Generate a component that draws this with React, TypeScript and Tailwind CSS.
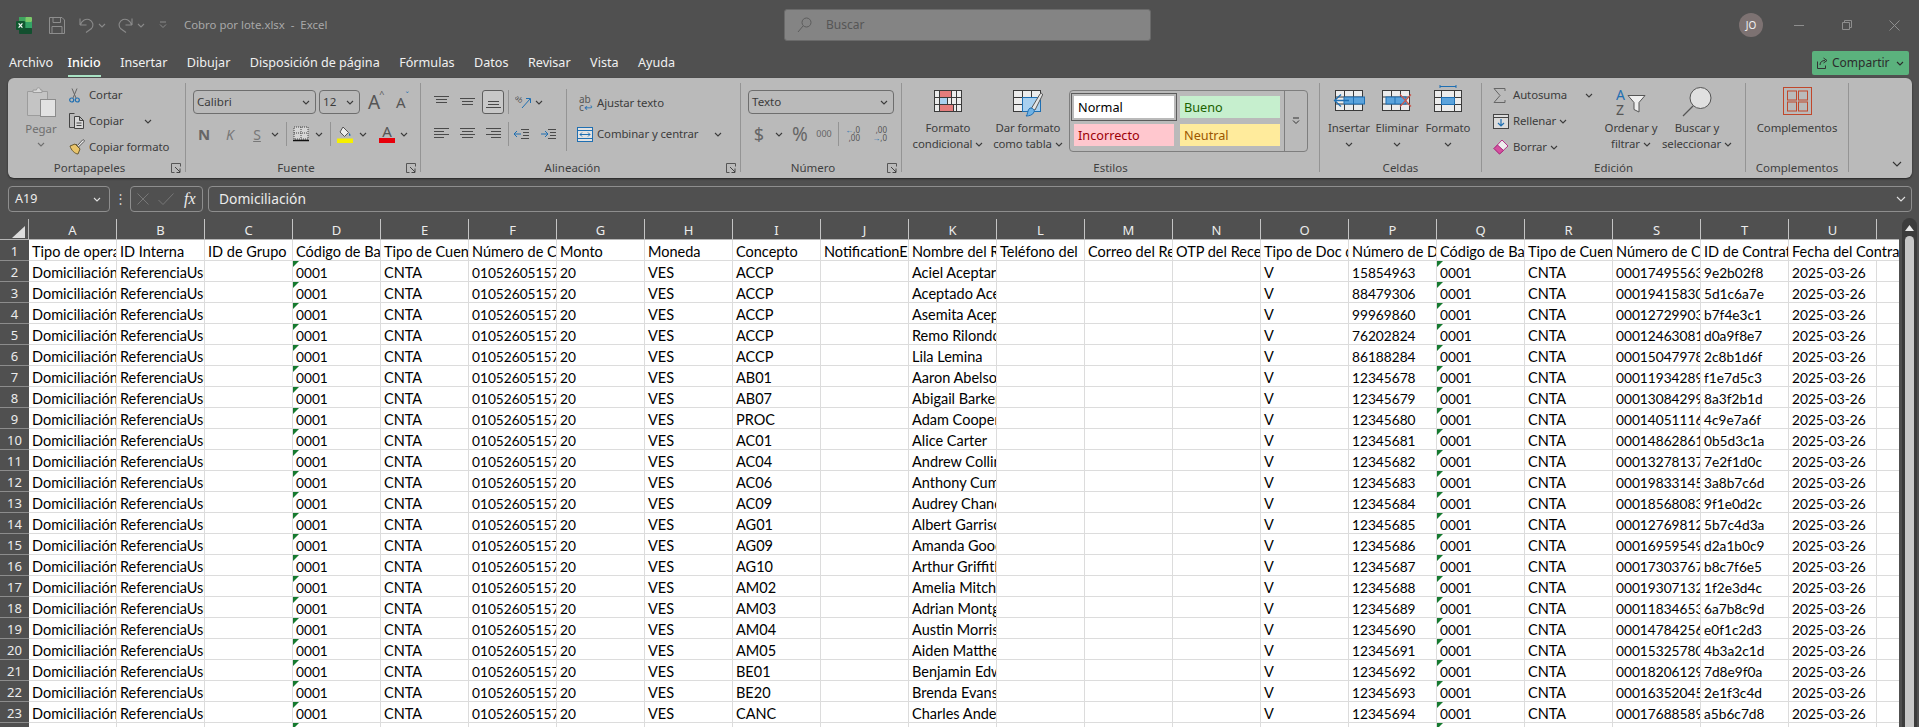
import type { ReactNode } from "react";

const ink = "#4a4a4a";
const blue = "#1f6fb2";

function Chev({ className = "", color = "#3c3c3c" }: { className?: string; color?: string }) {
  return (
    <svg width="8" height="5" viewBox="0 0 8 5" className={`shrink-0 ${className}`}>
      <path d="M1 1l3 3 3-3" fill="none" stroke={color} strokeWidth="1.1" />
    </svg>
  );
}

function Launcher() {
  return (
    <svg width="10" height="10" viewBox="0 0 10 10" className="absolute right-[4px] bottom-[5px]">
      <path d="M.5 9.5v-9h9v3M.5 9.5h3" fill="none" stroke="#555" />
      <path d="M4 4l5 5M9 5.5v4H5.5" fill="none" stroke="#444" />
    </svg>
  );
}

function VRule({ className = "" }: { className?: string }) {
  return <div className={`w-px shrink-0 bg-[#949494] ${className}`} />;
}

function Group({ label, width, launcher, labelPad, children }: { label: string; width: string; launcher?: boolean; labelPad?: string; children: ReactNode }) {
  return (
    <>
      <div className={`relative flex flex-col h-full shrink-0 ${width}`}>
        <div className="flex h-[82px]">{children}</div>
        <div className={`h-[16px] leading-[16px] text-[11.5px] text-center text-[#3f3f3f] ${labelPad ?? ""}`}>{label}</div>
        {launcher && <Launcher />}
      </div>
      <VRule className="h-[89px] mt-[5px]" />
    </>
  );
}

function BigButton({ icon, lines, width, chev, chevBelow }: { icon: ReactNode; lines: string[]; width: string; chev?: boolean; chevBelow?: boolean }) {
  return (
    <div className={`flex flex-col items-center shrink-0 ${width}`}>
      <div className="h-[42px] flex justify-center items-start">{icon}</div>
      {lines.map((l, i) => (
        <div key={l} className="h-[16px] leading-[16px] whitespace-nowrap flex items-center gap-[3px] text-[11.4px] tracking-[-0.1px] text-[#3c3c3c]">
          {l}
          {chev && i === lines.length - 1 && <Chev />}
        </div>
      ))}
      {chevBelow && (
        <div className="h-[16px] flex items-center">
          <Chev />
        </div>
      )}
    </div>
  );
}

function CmdRow({ icon, label, tail, color = "#3c3c3c" }: { icon: ReactNode; label: string; tail?: ReactNode; color?: string }) {
  return (
    <div className="flex items-center h-[26px] text-[11.4px] tracking-[-0.1px] whitespace-nowrap" style={{ color }}>
      <div className="w-[20px] shrink-0 flex items-center">{icon}</div>
      {label}
      {tail}
    </div>
  );
}

function SelectBox({ value, width }: { value: string; width: string }) {
  return (
    <div className={`flex items-center justify-between h-[24px] border border-[#6e6e6e] rounded-[4px] pl-[3px] pr-[5px] text-[11.6px] text-[#3c3c3c] ${width}`}>
      {value}
      <Chev />
    </div>
  );
}

/* ---------- title bar icons ---------- */

function ExcelLogo() {
  return (
    <svg width="16" height="17" viewBox="0 0 16 17" className="shrink-0">
      <rect x="3" y="0" width="13" height="17" rx="1.5" fill="#1d6f42" />
      <rect x="9" y="0" width="7" height="5" rx="1" fill="#7cc96a" />
      <rect x="3" y="0" width="6.5" height="5" fill="#3fa35f" />
      <rect x="9.5" y="5" width="6.5" height="6" fill="#33a466" />
      <rect x="3" y="11" width="13" height="6" rx="1" fill="#134f2f" />
      <rect x="0" y="4" width="9" height="9" rx="1" fill="#10582f" />
      <path d="M2.6 6.3l3.8 4.4M6.4 6.3l-3.8 4.4" stroke="#fff" strokeWidth="1.2" />
    </svg>
  );
}

function SaveIco() {
  return (
    <svg width="16" height="17" viewBox="0 0 16 17" className="shrink-0">
      <path d="M.5.5h12.5l2.500 2.500v13.500h-15z M4 .5v5h7.500v-5 M3 16.500v-7h10v7" fill="none" stroke="#8e8e8e" />
    </svg>
  );
}

function UndoIco({ flip }: { flip?: boolean }) {
  return (
    <svg width="15" height="16" viewBox="0 0 15 16" className={`shrink-0 ${flip ? "-scale-x-100" : ""}`}>
      <path d="M1 8V1.500M1 8h6.500M1.500 7.500C3 3 7 1.500 10 2.500c4 1.500 5 6 2.500 9L7 15.500" fill="none" stroke="#8a8a8a" strokeWidth="1.1" />
    </svg>
  );
}

/* ---------- ribbon icons ---------- */

const PasteIco = (
  <svg width="29" height="30" viewBox="0 0 29 30" className="mt-[9px]">
    <path d="M.5 4.500h20v24H.5z" fill="#c4c4c4" stroke="#9c9c9c" />
    <path d="M6 5.500V3h3.500c0-3 4-3 4 0H15v2.500z" fill="#d8d8d8" stroke="#9c9c9c" />
    <rect x="13.500" y="12.500" width="15" height="17" fill="#e2e2e2" stroke="#8c8c8c" />
  </svg>
);

const CutIco = (
  <svg width="11" height="15" viewBox="0 0 11 15">
    <path d="M3 .5l4 9.500M8 .5L4 10" fill="none" stroke="#666" />
    <circle cx="2.700" cy="12" r="2" fill="none" stroke={blue} strokeWidth="1.200" />
    <circle cx="8.300" cy="12" r="2" fill="none" stroke={blue} strokeWidth="1.200" />
  </svg>
);

const CopyIco = (
  <svg width="15" height="16" viewBox="0 0 15 16">
    <path d="M5 14.500H.5V.5h5" fill="none" stroke="#444" />
    <path d="M5.500 3.500h5l4 4v8h-9z M10.500 3.500v4h4M7.500 10h5M7.500 12.500h5" fill="#d8d8d8" stroke="#444" />
  </svg>
);

const PainterIco = (
  <svg width="16" height="16" viewBox="0 0 16 16">
    <path d="M1 7l5-2 5 5-2 5c-3 0-7-4-8-8z" fill="#e9c46a" stroke="#6a5a30" />
    <path d="M7 5l4 5" stroke="#6a5a30" />
    <path d="M8.500 6.500L13.500 1c1-1 2.500.5 1.500 1.500L9.500 8" fill="#eee" stroke="#555" />
  </svg>
);

const BorderIco = (
  <svg width="16" height="16" viewBox="0 0 16 16">
    <rect x="1" y="1" width="14" height="12" fill="#d5d5d5" />
    <path d="M1 1h14v12H1zM8 1v12M1 7h14" fill="none" stroke="#444" strokeDasharray="1 1" />
    <path d="M0 14.500h16" stroke="#111" strokeWidth="1.500" />
  </svg>
);

const FillIco = (
  <svg width="16" height="17" viewBox="0 0 16 17">
    <path d="M6 1l5.500 5.500-4 4-4.500-4.500z" fill="#ececec" stroke="#555" />
    <path d="M12.500 7c1 1.500 1.500 2.500.5 3-1 0-1.500-1.500-.5-3z" fill={blue} />
    <rect x="0" y="12.500" width="16" height="4.500" fill="#f6f000" />
  </svg>
);

function AlignIco({ rows }: { rows: string }) {
  return (
    <svg width="15" height="14" viewBox="0 0 15 14" className="shrink-0">
      <path d={rows} fill="none" stroke={ink} />
    </svg>
  );
}

const TableBase = ({ w, h, cols, rows, x = 0.5, y = 0.5 }: { w: number; h: number; cols: number[]; rows: number[]; x?: number; y?: number }) => (
  <>
    <rect x={x} y={y} width={w} height={h} fill="#ececec" />
    <path d={`${cols.map((c) => `M${c} ${y}v${h}`).join("")}${rows.map((r) => `M${x} ${r}h${w}`).join("")}`} stroke="#3a3a3a" fill="none" />
    <rect x={x} y={y} width={w} height={h} fill="none" stroke="#3a3a3a" />
  </>
);

const CondIco = (
  <svg width="28" height="22" viewBox="0 0 28 22" className="mt-[12px]">
    <TableBase w={27} h={21} cols={[5.500, 17.500, 22.500]} rows={[7.500, 14.500]} />
    <rect x="5.500" y="0.500" width="12" height="7" fill="#e37c7c" stroke="#3a3a3a" />
    <rect x="5.500" y="7.500" width="8" height="7" fill="#a8d0f0" stroke="#3a3a3a" />
    <rect x="5.500" y="14.500" width="14" height="7" fill="#e37c7c" stroke="#3a3a3a" />
  </svg>
);

const TableFmtIco = (
  <svg width="30" height="28" viewBox="0 0 30 28" className="mt-[12px]">
    <TableBase w={27} h={21} cols={[9.500, 18.500]} rows={[7.500, 14.500]} />
    <rect x="9.500" y="7.500" width="18" height="14" fill="#a8d0f0" stroke={blue} />
    <path d="M18 19L27 4c1-1.500 3-.5 2.500 1L22 20z" fill="#e5e5e5" stroke="#555" />
    <path d="M17 18c3 0 5 2 4 4-1 3-5 4-8 4 2-1 1-6 4-8z" fill="#6fb2e5" stroke={blue} />
  </svg>
);

const InsertIco = (
  <svg width="32" height="21" viewBox="0 0 32 21" className="mt-[12px] ml-[-1px]">
    <rect x="2.500" y="0.500" width="27" height="20" fill="#ececec" stroke="#3a3a3a" />
    <path d="M11.500.5v20M20.500.5v20M2.500 7h27M2.500 14h27" stroke="#3a3a3a" />
    <rect x="11" y="7" width="20.500" height="7" fill="#5ba3dc" stroke={blue} />
    <path d="M20.500 7v7" stroke={blue} />
    <path d="M8 4.500L1.500 10.500 8 16.500M1.500 10.500H16" fill="none" stroke={blue} strokeWidth="1.300" />
  </svg>
);

const DeleteIco = (
  <svg width="30" height="21" viewBox="0 0 30 21" className="mt-[12px]">
    <rect x="0.500" y="0.500" width="27" height="20" fill="#ececec" stroke="#3a3a3a" />
    <path d="M9.500.5v20M18.500.5v20M.5 7h27M.5 14h27" stroke="#3a3a3a" />
    <rect x="4" y="7" width="20" height="7" fill="#5ba3dc" stroke={blue} />
    <path d="M13 7v7" stroke={blue} />
    <path d="M18 4.500l11 12M29 4.500l-11 12" stroke="#c8584e" strokeWidth="1.200" />
  </svg>
);

const FormatIco = (
  <svg width="28" height="27" viewBox="0 0 28 27" className="mt-[7px]">
    <path d="M6 1.500h16M6 0v3M22 0v3" stroke={blue} />
    <rect x="0.500" y="5.500" width="27" height="21" fill="#ececec" stroke="#3a3a3a" />
    <path d="M7.500 5.500v21M20.500 5.500v21M.5 12.500h27M.5 19.500h27" stroke="#3a3a3a" />
    <rect x="7.500" y="12.500" width="13" height="7" fill="#5ba3dc" stroke={blue} />
  </svg>
);

const SumIco = (
  <svg width="13" height="15" viewBox="0 0 13 15">
    <path d="M12 3V.5H1L7 7.500 1 14.500h11V12" fill="none" stroke="#666" />
  </svg>
);

const FillDownIco = (
  <svg width="16" height="15" viewBox="0 0 16 15">
    <rect x="0.500" y="0.500" width="15" height="14" fill="#dcdcdc" stroke="#444" />
    <path d="M.5 3.500h15" stroke="#444" />
    <path d="M8 5v7M5 9l3 3 3-3" fill="none" stroke={blue} strokeWidth="1.200" />
  </svg>
);

const EraserIco = (
  <svg width="16" height="16" viewBox="0 0 16 16">
    <path d="M1 9.500L9 1l6 6-8.500 8z" fill="#eee" stroke="#b6348a" />
    <path d="M1 9.500L4.500 6l6 5.500-4 3.500z" fill="#d64f9e" stroke="#a62a7c" />
  </svg>
);

const SortIco = (
  <svg width="31" height="28" viewBox="0 0 31 28" className="mt-[10px]">
    <text x="0" y="12" fontSize="14" fill={blue} fontFamily="Noto Sans">A</text>
    <text x="0" y="27" fontSize="14" fill="#555" fontFamily="Noto Sans">Z</text>
    <path d="M12 7.500h17l-6 7v9.500l-5-2.500v-7z" fill="#efefef" stroke="#555" />
  </svg>
);

const FindIco = (
  <svg width="30" height="30" viewBox="0 0 30 30" className="mt-[9px]">
    <circle cx="18.500" cy="11" r="10.500" fill="#e0e0e0" stroke="#555" />
    <path d="M11 19L1 29" stroke="#555" strokeWidth="1.200" />
  </svg>
);

const AddinIco = (
  <svg width="29" height="28" viewBox="0 0 29 28" className="mt-[9px]">
    <rect x="0.500" y="0.500" width="28" height="27" fill="none" stroke="#c0472b" />
    <rect x="4.500" y="4" width="9" height="9" fill="none" stroke="#c0472b" />
    <rect x="15.500" y="4" width="9" height="9" fill="none" stroke="#c0472b" />
    <rect x="4.500" y="15" width="9" height="9" fill="none" stroke="#c0472b" />
    <rect x="15.500" y="15" width="9" height="9" fill="none" stroke="#c0472b" />
  </svg>
);

/* ---------- sheet data ---------- */

const columns = "ABCDEFGHIJKLMNOPQRSTU".split("");

const headerRow = [
  "Tipo de operación", "ID Interna", "ID de Grupo", "Código de Banco", "Tipo de Cuenta", "Número de Cuenta", "Monto",
  "Moneda", "Concepto", "NotificationEmail", "Nombre del Receptor", "Teléfono del\u00a0\u00a0Receptor", "Correo del Receptor",
  "OTP del Receptor", "Tipo de Doc del Receptor", "Número de Documento", "Código de Banco", "Tipo de Cuenta",
  "Número de Cuenta", "ID de Contrato", "Fecha del Contrato",
];

const records: [string, string, string, string, string][] = [
  ["ACCP", "Aciel Aceptar", "15854963", "000174955639", "9e2b02f8"],
  ["ACCP", "Aceptado Aceptado", "88479306", "000194158300", "5d1c6a7e"],
  ["ACCP", "Asemita Aceptada", "99969860", "000127299033", "b7f4e3c1"],
  ["ACCP", "Remo Rilondo", "76202824", "000124630811", "d0a9f8e7"],
  ["ACCP", "Lila Lemina", "86188284", "000150479788", "2c8b1d6f"],
  ["AB01", "Aaron Abelson", "12345678", "000119342899", "f1e7d5c3"],
  ["AB07", "Abigail Barker", "12345679", "000130842999", "8a3f2b1d"],
  ["PROC", "Adam Cooper", "12345680", "000140511166", "4c9e7a6f"],
  ["AC01", "Alice Carter", "12345681", "000148628610", "0b5d3c1a"],
  ["AC04", "Andrew Collins", "12345682", "000132781377", "7e2f1d0c"],
  ["AC06", "Anthony Cummings", "12345683", "000198331455", "3a8b7c6d"],
  ["AC09", "Audrey Chandler", "12345684", "000185680833", "9f1e0d2c"],
  ["AG01", "Albert Garrison", "12345685", "000127698122", "5b7c4d3a"],
  ["AG09", "Amanda Goodwin", "12345686", "000169595499", "d2a1b0c9"],
  ["AG10", "Arthur Griffith", "12345687", "000173037677", "b8c7f6e5"],
  ["AM02", "Amelia Mitchell", "12345688", "000193071322", "1f2e3d4c"],
  ["AM03", "Adrian Montgomery", "12345689", "000118346533", "6a7b8c9d"],
  ["AM04", "Austin Morris", "12345690", "000147842566", "e0f1c2d3"],
  ["AM05", "Aiden Matthews", "12345691", "000153257800", "4b3a2c1d"],
  ["BE01", "Benjamin Edwards", "12345692", "000182061299", "7d8e9f0a"],
  ["BE20", "Brenda Evans", "12345693", "000163520455", "2e1f3c4d"],
  ["CANC", "Charles Anderson", "12345694", "000176885899", "a5b6c7d8"],
];

function toCells(r: [string, string, string, string, string]) {
  return [
    "Domiciliación", "ReferenciaUsuario", "", "0001", "CNTA", "010526051570000", "20", "VES", r[0], "", r[1], "", "", "", "V",
    r[2], "0001", "CNTA", r[3], r[4], "2025-03-26",
  ];
}

function Cell({ text, flag, open, last }: { text?: string; flag?: boolean; open?: boolean; last?: boolean }) {
  // digits are narrower in the sheet font than in Lato
  const numeric = text ? /^[0-9a-f-]+$/.test(text) : false;
  return (
    <div
      className={`relative whitespace-nowrap bg-white border-b border-[#dcdcdc] pl-[3px] leading-[23px] text-black ${numeric ? "text-[13.7px]" : "text-[14.5px]"} ${open ? "overflow-visible z-10" : "overflow-hidden"} ${last || open ? "" : "border-r"}`}
    >
      {flag && <span className="absolute top-0 left-0 w-0 h-0 border-t-[6px] border-r-[6px] border-t-[#157a2f] border-r-transparent" />}
      {text}
    </div>
  );
}

function RowHead({ n }: { n?: number }) {
  return <div className="h-[21px] bg-[#505050] border-b border-[#8c8c8c] text-center leading-[22px] text-[13px] text-[#ececec]">{n}</div>;
}

function Sheet() {
  return (
    <div className="grid grid-cols-[29px_repeat(21,88px)_22px] auto-rows-[21px] overflow-hidden w-[1899px] shrink-0 font-['Lato',sans-serif]">
      <div className="relative bg-[#505050] border-b border-r border-[#b5b5b5]">
        <svg width="13" height="12" viewBox="0 0 13 12" className="absolute right-[3px] bottom-[1px]">
          <path d="M13 0v12H0z" fill="#dcdcdc" />
        </svg>
      </div>
      {columns.map((c) => (
        <div key={c} className="bg-[#505050] border-b border-r border-b-[#b5b5b5] border-r-[#c4c4c4] text-center leading-[22px] text-[13px] text-[#ececec] font-['Noto_Sans',sans-serif]">
          {c}
        </div>
      ))}
      <div className="bg-[#505050] border-b border-[#b5b5b5]" />

      <div className="font-['Noto_Sans',sans-serif]"><RowHead n={1} /></div>
      {headerRow.map((h, i) => (
        <Cell key={i} text={h} open={i === 20} />
      ))}
      <Cell last />

      {records.map((r, ri) => (
        <div key={ri} className="contents">
          <div className="font-['Noto_Sans',sans-serif]"><RowHead n={ri + 2} /></div>
          {toCells(r).map((t, i) => (
            <Cell key={i} text={t} flag={i === 3 || i === 16} />
          ))}
          <Cell last />
        </div>
      ))}

      <div className="font-['Noto_Sans',sans-serif]"><RowHead /></div>
      {columns.map((c, i) => (
        <Cell key={c} flag={i === 3 || i === 16} />
      ))}
      <Cell last />
    </div>
  );
}

export default function App() {
  return (
    <div className="relative flex flex-col w-[1919px] h-[727px] overflow-hidden bg-[#505050] font-['Noto_Sans','Open_Sans',sans-serif]">
      {/* title bar */}
      <div className="flex items-center h-[50px] shrink-0 pl-[16px] text-[12px] text-[#a8a8a8]">
        <ExcelLogo />
        <div className="ml-[17px]"><SaveIco /></div>
        <div className="ml-[14px]"><UndoIco /></div>
        <Chev className="ml-[4px]" color="#8a8a8a" />
        <div className="ml-[12px]"><UndoIco flip /></div>
        <Chev className="ml-[4px]" color="#8a8a8a" />
        <svg width="8" height="8" viewBox="0 0 8 8" className="ml-[14px]">
          <path d="M1 1h6M1 3.500l3 3 3-3" fill="none" stroke="#8a8a8a" />
        </svg>
        <span className="ml-[17px] w-[150px] whitespace-nowrap text-[11.4px]">Cobro por lote.xlsx&nbsp; -&nbsp; Excel</span>
        <div className="ml-[450px] flex items-center w-[367px] h-[32px] bg-[#848484] border border-[#6a6a6a] rounded-[3px] pl-[12px] text-[#565656]">
          <svg width="15" height="16" viewBox="0 0 15 16">
            <circle cx="9.500" cy="5.500" r="4.500" fill="none" stroke="#5c5c5c" />
            <path d="M6 9l-5 6" stroke="#5c5c5c" />
          </svg>
          <span className="ml-[14px]">Buscar</span>
        </div>
        <div className="ml-[588px] flex items-center justify-center w-[24px] h-[24px] rounded-full bg-[#7d7272] text-[10px] text-[#f2f2f2]">JO</div>
        <div className="ml-[31px] w-[10px] h-px bg-[#8e8e8e]" />
        <svg width="10" height="10" viewBox="0 0 10 10" className="ml-[38px]">
          <path d="M2.500 2.500V.5h7v7h-2M.5 2.500h7v7h-7z" fill="none" stroke="#8e8e8e" />
        </svg>
        <svg width="11" height="11" viewBox="0 0 11 11" className="ml-[37px]">
          <path d="M.5.5l10 10M10.500.5l-10 10" stroke="#8e8e8e" />
        </svg>
      </div>

      {/* tabs */}
      <div className="flex items-start h-[28px] shrink-0 pl-[9px] pr-[10px] text-[12.6px] text-[#f0f0f0]">
        <div className="flex items-center gap-[19.5px] h-[26px] flex-1 whitespace-nowrap">
          <span>Archivo</span>
          <span className="relative -ml-[5px] font-medium text-white">
            Inicio
            <span className="absolute left-0 right-0 top-[21px] h-[2px] bg-[#a9e2c4]" />
          </span>
          <span>Insertar</span>
          <span>Dibujar</span>
          <span>Disposición de página</span>
          <span>Fórmulas</span>
          <span>Datos</span>
          <span>Revisar</span>
          <span>Vista</span>
          <span>Ayuda</span>
        </div>
        <div className="mt-px flex items-center w-[97px] h-[24px] rounded-[2px] bg-[#5bb27d] pl-[5px] gap-[4px] text-[12px] text-[#2c2c2c]">
          <svg width="11" height="12" viewBox="0 0 11 12" className="shrink-0">
            <path d="M.5 4.500v7h8v-3" fill="none" stroke="#333" />
            <path d="M3 8c0-3 2-4.500 5-4.500M6.500 1l3.500 2.500L6.500 6" fill="none" stroke="#333" />
          </svg>
          Compartir
          <Chev className="ml-[2px]" color="#2c2c2c" />
        </div>
      </div>

      {/* ribbon */}
      <div className="flex h-[100px] shrink-0 w-[1904px] ml-[8px] rounded-[6px] bg-[#bababa] shadow-[0_1px_2px_rgba(0,0,0,0.55)] text-[#3c3c3c]">
        <Group label="Portapapeles" width="w-[177px]" launcher labelPad="pr-[14px]">
          <div className="flex flex-col items-center w-[50px] ml-[8px] text-[#6f6f6f] text-[11.4px]">
            {PasteIco}
            <div className="mt-[4px] leading-[16px]">Pegar</div>
            <Chev className="mt-[5px]" color="#6f6f6f" />
          </div>
          <div className="ml-[3px] pt-[4px]">
            <CmdRow icon={CutIco} label="Cortar" />
            <CmdRow icon={CopyIco} label="Copiar" tail={<Chev className="ml-[20px]" />} />
            <CmdRow icon={PainterIco} label="Copiar formato" />
          </div>
        </Group>

        <Group label="Fuente" width="w-[234px]" launcher labelPad="pr-[14px]">
          <div className="flex flex-col pt-[12px] pl-[7px]">
            <div className="flex items-center h-[24px]">
              <SelectBox value="Calibri" width="w-[123px]" />
              <div className="ml-[3px]"><SelectBox value="12" width="w-[41px]" /></div>
              <span className="ml-[8px] text-[19px] leading-none text-[#555] w-[16px] flex">A<sup className="text-[9px] mt-[1px] -ml-[1px] top-0">^</sup></span>
              <span className="ml-[12px] text-[15px] leading-none text-[#555] w-[13px] flex">A<sup className="text-[8px] mt-[1px] top-0 text-[#1f6fb2]">ˇ</sup></span>
            </div>
            <div className="flex items-center h-[24px] mt-[8px]">
              <span className="ml-[4px] w-[14px] text-center text-[15px] font-bold text-[#666]">N</span>
              <span className="ml-[12px] w-[14px] text-center text-[14px] italic text-[#777]">K</span>
              <span className="ml-[13px] w-[14px] text-center text-[14px] underline text-[#777]">S</span>
              <Chev className="ml-[7px]" />
              <VRule className="ml-[7px] h-[24px]" />
              <div className="ml-[6px] flex">{BorderIco}</div>
              <Chev className="ml-[6px]" />
              <VRule className="ml-[7px] h-[24px]" />
              <div className="ml-[6px] flex">{FillIco}</div>
              <Chev className="ml-[6px]" />
              <div className="ml-[12px] flex flex-col items-center w-[16px] text-[15px] leading-[13px] text-[#555]">
                A
                <div className="w-[16px] h-[5px] bg-[#e8000b]" />
              </div>
              <Chev className="ml-[5px]" />
            </div>
          </div>
        </Group>

        <Group label="Alineación" width="w-[319px]" launcher labelPad="pr-[16px]">
          <div className="flex flex-col w-[145px] pt-[12px] pl-[9px] shrink-0">
            <div className="flex items-center h-[24px]">
              <div className="flex justify-center w-[22px]"><AlignIco rows="M0 1.500h15M2 4.500h11M2 7.500h11" /></div>
              <div className="flex justify-center w-[22px] ml-[4px]"><AlignIco rows="M0 3.500h15M2 6.500h11M2 9.500h11" /></div>
              <div className="flex justify-center items-center w-[22px] h-[24px] ml-[4px] border border-[#5e5e5e] rounded-[3px] bg-[#c8c8c8]"><AlignIco rows="M2 6.500h11M2 9.500h11M0 12.500h15" /></div>
              <VRule className="ml-[4px] h-[24px]" />
              <svg width="16" height="16" viewBox="0 0 16 16" className="ml-[6px]">
                <text x="0" y="6" fontSize="7" fill="#555" fontFamily="Noto Sans" transform="rotate(40 2 4)">ab</text>
                <path d="M7 14L15 5M11 4.500h4.500V9" fill="none" stroke={blue} />
              </svg>
              <Chev className="ml-[4px]" />
            </div>
            <div className="flex items-center h-[24px] mt-[8px]">
              <div className="flex justify-center w-[22px]"><AlignIco rows="M0 1.500h15M0 4.500h10M0 7.500h15M0 10.500h10" /></div>
              <div className="flex justify-center w-[22px] ml-[4px]"><AlignIco rows="M0 1.500h15M2 4.500h11M0 7.500h15M2 10.500h11" /></div>
              <div className="flex justify-center w-[22px] ml-[4px]"><AlignIco rows="M0 1.500h15M5 4.500h10M0 7.500h15M5 10.500h10" /></div>
              <VRule className="ml-[4px] h-[24px]" />
              <svg width="15" height="12" viewBox="0 0 15 12" className="ml-[5px]">
                <path d="M7 1.500h8M9 4.500h6M9 7.500h6M7 10.500h8" stroke={ink} fill="none" />
                <path d="M0 6h7M3 3L0 6l3 3" fill="none" stroke={blue} />
              </svg>
              <svg width="15" height="12" viewBox="0 0 15 12" className="ml-[12px]">
                <path d="M7 1.500h8M9 4.500h6M9 7.500h6M7 10.500h8" stroke={ink} fill="none" />
                <path d="M0 6h7M4 3l3 3-3 3" fill="none" stroke={blue} />
              </svg>
            </div>
          </div>
          <VRule className="h-[62px] mt-[11px]" />
          <div className="flex flex-col pt-[12px] text-[11.4px] tracking-[-0.1px] whitespace-nowrap">
            <div className="flex items-center h-[24px] pl-[12px] pt-px">
              <div className="flex flex-col text-[10px] leading-[8px] w-[15px]">
                <span className="text-[#555]">ab</span>
                <span className="text-[#555]">c<span className="text-[#1f6fb2]">↩</span></span>
              </div>
              <span className="ml-[3px]">Ajustar texto</span>
            </div>
            <div className="flex items-center h-[24px] mt-[8px] pl-[10px]">
              <svg width="16" height="15" viewBox="0 0 16 15">
                <rect x="0.500" y="0.500" width="15" height="14" fill="#e2e2e2" stroke={blue} />
                <path d="M.5 3.500h15M.5 11.500h15" stroke={blue} />
                <path d="M3 7.500h10M5 5.500l-2 2 2 2M11 5.500l2 2-2 2" fill="none" stroke={blue} />
              </svg>
              <span className="ml-[4px]">Combinar y centrar</span>
              <Chev className="ml-[16px]" />
            </div>
          </div>
        </Group>

        <Group label="Número" width="w-[160px]" launcher labelPad="pr-[16px]">
          <div className="flex flex-col pt-[12px] pl-[7px]">
            <SelectBox value="Texto" width="w-[146px]" />
            <div className="flex items-center h-[24px] mt-[8px]">
              <span className="ml-[5px] w-[12px] text-center text-[18px] text-[#666]">$</span>
              <Chev className="ml-[10px]" />
              <span className="ml-[9px] w-[16px] text-center text-[19px] text-[#666]">%</span>
              <span className="ml-[8px] w-[16px] text-center text-[9px] text-[#666]">000</span>
              <VRule className="ml-[6px] h-[24px]" />
              <div className="ml-[5px] flex flex-col w-[16px] text-[8px] leading-[8px] text-[#555]">
                <span className="text-right"><span className="text-[#1f6fb2]">←</span>,0</span>
                <span className="text-right">,00</span>
              </div>
              <div className="ml-[11px] flex flex-col w-[16px] text-[8px] leading-[8px] text-[#555]">
                <span className="text-right">,00</span>
                <span className="text-right"><span className="text-[#1f6fb2]">→</span>,0</span>
              </div>
            </div>
          </div>
        </Group>

        <Group label="Estilos" width="w-[417px]">
          <div className="flex pl-[6px] shrink-0">
            <BigButton icon={CondIco} lines={["Formato", "condicional"]} width="w-[80px]" chev />
            <BigButton icon={TableFmtIco} lines={["Dar formato", "como tabla"]} width="w-[80px]" chev />
          </div>
          <div className="flex ml-[1px] mt-[12px] w-[239px] h-[62px] border border-[#7e7e7e] rounded-[4px] text-[12.7px]">
            <div className="grid grid-cols-[100px_100px] auto-rows-[22px] gap-x-[6px] gap-y-[6px] pl-[4px] pt-[5px]">
              <div className="bg-white outline-[1px] outline-offset-[2px] outline-[#5c5c5c] text-black pl-[4px] leading-[22px]">Normal</div>
              <div className="bg-[#c6efce] text-[#1b6100] pl-[4px] leading-[22px]">Bueno</div>
              <div className="bg-[#ffc7ce] text-[#9c0006] pl-[4px] leading-[22px]">Incorrecto</div>
              <div className="bg-[#ffeb9c] text-[#9c5700] pl-[4px] leading-[22px]">Neutral</div>
            </div>
            <div className="flex items-center justify-center ml-[4px] flex-1 border-l border-[#7e7e7e]">
              <svg width="8" height="8" viewBox="0 0 8 8">
                <path d="M1 1h6M1 3.500l3 3 3-3" fill="none" stroke="#333" />
              </svg>
            </div>
          </div>
        </Group>

        <Group label="Celdas" width="w-[161px]">
          <div className="flex pl-[5px]">
            <BigButton icon={InsertIco} lines={["Insertar"]} width="w-[48px]" chevBelow />
            <BigButton icon={DeleteIco} lines={["Eliminar"]} width="w-[48px]" chevBelow />
            <BigButton icon={FormatIco} lines={["Formato"]} width="w-[54px]" chevBelow />
          </div>
        </Group>

        <Group label="Edición" width="w-[263px]">
          <div className="pl-[11px] pt-[4px] w-[113px] shrink-0">
            <CmdRow icon={SumIco} label="Autosuma" tail={<Chev className="ml-[18px]" />} />
            <CmdRow icon={FillDownIco} label="Rellenar" tail={<Chev className="ml-[3px]" />} />
            <CmdRow icon={EraserIco} label="Borrar" tail={<Chev className="ml-[3px]" />} />
          </div>
          <BigButton icon={SortIco} lines={["Ordenar y", "filtrar"]} width="w-[72px]" chev />
          <BigButton icon={FindIco} lines={["Buscar y", "seleccionar"]} width="w-[60px]" chev />
        </Group>

        <Group label="Complementos" width="w-[102px]">
          <div className="flex justify-center w-full">
            <BigButton icon={AddinIco} lines={["Complementos"]} width="w-[90px]" />
          </div>
        </Group>

        <div className="flex-1 flex items-end justify-end pb-[11px] pr-[10px]">
          <svg width="10" height="6" viewBox="0 0 10 6">
            <path d="M1 1l4 4 4-4" fill="none" stroke="#333" strokeWidth="1.100" />
          </svg>
        </div>
      </div>

      {/* formula bar */}
      <div className="flex items-center h-[26px] shrink-0 mt-[8px] ml-[8px] w-[1904px] text-[12.5px] text-[#ececec]">
        <div className="flex items-center justify-between h-full w-[102px] border border-[#8e8e8e] rounded-[4px] pl-[6px] pr-[8px]">
          A19
          <Chev color="#e0e0e0" />
        </div>
        <div className="flex justify-center w-[20px] text-[#cfcfcf] leading-none">⋮</div>
        <div className="flex items-center h-full w-[73px] border border-[#8e8e8e] rounded-[4px] pl-[6px]">
          <svg width="12" height="12" viewBox="0 0 12 12">
            <path d="M.5.5l11 11M11.500.5l-11 11" stroke="#777" />
          </svg>
          <svg width="16" height="12" viewBox="0 0 16 12" className="ml-[9px]">
            <path d="M.5 7l4.500 4.500L15.500.5" fill="none" stroke="#777" />
          </svg>
          <span className="ml-[10px] font-['Liberation_Serif',serif] italic text-[16px]">fx</span>
        </div>
        <div className="flex items-center justify-between flex-1 h-full ml-[5px] border border-[#8e8e8e] rounded-[4px] pl-[10px] pr-[5px] text-[13.8px]">
          Domiciliación
          <svg width="10" height="6" viewBox="0 0 10 6">
            <path d="M1 1l4 4 4-4" fill="none" stroke="#e0e0e0" strokeWidth="1.100" />
          </svg>
        </div>
      </div>

      {/* sheet + scrollbar */}
      <div className="flex flex-1 min-h-0 mt-[7px]">
        <Sheet />
        <div className="flex flex-col items-center w-[15px] ml-[3px] -mt-px rounded-t-full bg-[#3c3c3c] pt-[7px]">
          <svg width="9" height="6" viewBox="0 0 9 6">
            <path d="M4.500 0L9 6H0z" fill="#e8e8e8" />
          </svg>
          <div className="mt-[5px] w-[9px] flex-1 rounded-t-full bg-[#c8c8c8]" />
        </div>
      </div>
    </div>
  );
}
